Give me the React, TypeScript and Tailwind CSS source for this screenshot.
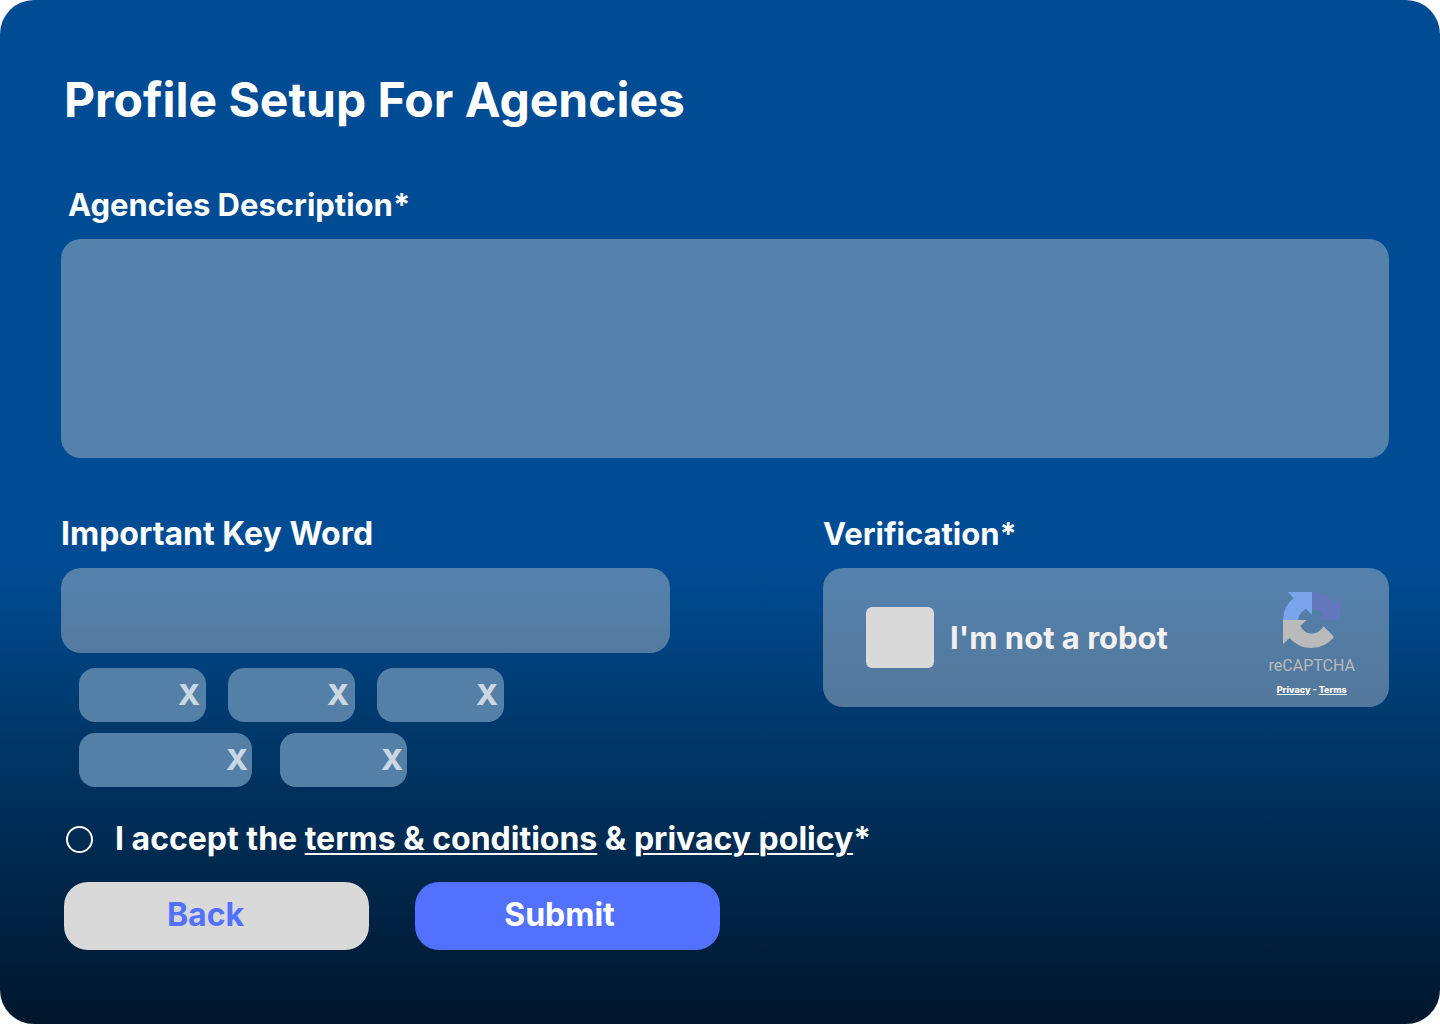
function RecaptchaLogo() {
  return (
    <svg viewBox="99 36 171 168" className="h-14 w-[57px]" aria-hidden="true">
      <path d="M113 36H186V104L168 86Q147 98 144 120H99Q99 79 131 54Z" fill="#7aa5ec" />
      <path d="M186 36Q229 36 254 70L270 54V120H202L220 103Q207 87 186 86Z" fill="#6577bc" />
      <path
        d="M99 120H170L151 138Q162 160 185 161Q208 160 221 139L252 171Q225 204 185 204Q145 204 118 174L99 193Z"
        fill="#b9babc"
      />
    </svg>
  );
}

function Chip({ wide = false, tight = false }: { wide?: boolean; tight?: boolean }) {
  return (
    <div
      className={`flex h-[54px] items-center justify-end rounded-2xl bg-[#5480a7] ${
        wide ? "w-[173px]" : "w-[127px]"
      } ${tight ? "pr-1" : "pr-1.5"}`}
    >
      <button
        type="button"
        aria-label="Remove key word"
        className="text-[29px] leading-[52px] font-extrabold text-[#cbd7e3]"
      >
        X
      </button>
    </div>
  );
}

export default function App() {
  return (
    <div className="min-h-screen bg-white font-['Inter',sans-serif]">
      <form
        onSubmit={(e) => e.preventDefault()}
        className="min-h-screen rounded-[34px] bg-[linear-gradient(180deg,#004c94_0%,#004c94_55%,#003768_72%,#00162c_100%)] pt-16 pr-[51px] pb-[74px] pl-[61px] text-[31px] leading-[44px] font-bold text-white"
      >
        <h1 className="pl-[3px] text-[48px] leading-[72px]">Profile Setup For Agencies</h1>

        <label htmlFor="description" className="mt-[47px] block pl-[7px]">
          Agencies Description*
        </label>
        <textarea
          id="description"
          className="mt-3 block h-[219px] w-full resize-none rounded-[20px] bg-[#5482ad] p-5 text-2xl font-normal outline-none"
        />

        <div className="mt-[54px] grid grid-cols-[609fr_566fr] gap-x-[153px]">
          <section>
            <label htmlFor="keyword" className="block text-[32px] leading-[44px]">
              Important Key Word
            </label>
            <input
              id="keyword"
              type="text"
              className="mt-3 block h-[85px] w-full rounded-[20px] bg-linear-to-b from-[#5482ad] to-[#547aa0] px-5 text-2xl font-normal outline-none"
            />
            <div className="mt-[15px] flex gap-[22px] pl-[18px]">
              <Chip />
              <Chip />
              <Chip />
            </div>
            <div className="mt-[11px] flex gap-7 pl-[18px]">
              <Chip wide tight />
              <Chip tight />
            </div>
          </section>

          <section>
            <h2>Verification*</h2>
            <div className="mt-3 flex h-[139px] items-center rounded-[20px] bg-linear-to-b from-[#5482ad] to-[#54779b] pr-[34px] pl-[43px]">
              <input
                id="robot"
                type="checkbox"
                className="h-[61px] w-[68px] shrink-0 appearance-none rounded-md bg-[#d9d9d9] checked:bg-[#5271ff]"
              />
              <label htmlFor="robot" className="ml-4 whitespace-nowrap text-[#f1f1f1]">
                I'm not a robot
              </label>
              <div className="ml-auto flex flex-col items-center pt-3.5">
                <RecaptchaLogo />
                <span className="mt-1 font-['Roboto',sans-serif] text-[16px] leading-7 font-normal text-[#b9babc]">
                  reCAPTCHA
                </span>
                <span className="mt-0.5 text-[9px] leading-4 font-extrabold">
                  <a href="#privacy" className="underline">Privacy</a> -{" "}
                  <a href="#terms" className="underline">Terms</a>
                </span>
              </div>
            </div>
          </section>
        </div>

        <div className="mt-[30px] flex items-center pl-[5px]">
          <input
            id="accept"
            type="radio"
            className="size-[27px] shrink-0 appearance-none rounded-full border-2 border-white checked:bg-[#5271ff]"
          />
          <label htmlFor="accept" className="ml-[22px] text-[32px] leading-[44px]">
            I accept the{" "}
            <a href="#terms-conditions" className="underline decoration-2 underline-offset-3">terms &amp; conditions</a> &amp;{" "}
            <a href="#privacy-policy" className="underline decoration-2 underline-offset-3">privacy policy</a>*
          </label>
        </div>

        <div className="mt-[21px] flex gap-[46px] pl-[3px] text-[32px]">
          <button type="button" className="h-[68px] w-[305px] rounded-3xl bg-[#d9d9d9] pr-[22px] pb-0.5 text-[#5271ff]">
            Back
          </button>
          <button type="submit" className="h-[68px] w-[305px] rounded-3xl bg-[#5271ff] pr-4 pb-0.5">
            Submit
          </button>
        </div>
      </form>
    </div>
  );
}
